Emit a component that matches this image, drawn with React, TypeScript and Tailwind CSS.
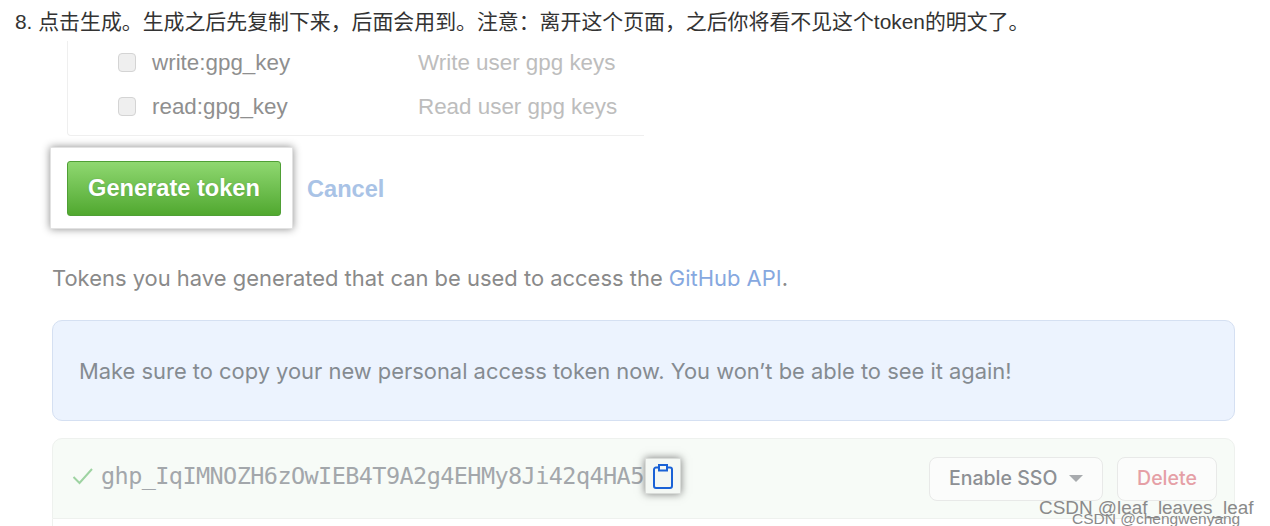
import React from "react";

const sans = "font-['Inter','Liberation_Sans',sans-serif]";

function GpgRow({ name, desc }: { name: string; desc: string }) {
  return (
    <div className="flex items-center h-[44px]">
      <span className="ml-[50px] w-[18px] h-[19px] rounded-[4px] border border-[#d4d4d4] bg-[#efefef] -translate-y-[1px]" />
      <span className="ml-[16px] w-[266px] text-[22.4px] text-[#8f8f8f] font-['Liberation_Sans',sans-serif]">{name}</span>
      <span className="text-[22.4px] text-[#bdbdbd] font-['Liberation_Sans',sans-serif]">{desc}</span>
    </div>
  );
}

export default function App() {
  return (
    <div className="w-[1270px] h-[526px] overflow-hidden bg-white relative">
      <p className="pl-[15px] pt-[9px] h-[41px] text-[20.9px] leading-[26px] text-[#333333] font-['Liberation_Sans','Noto_Sans_CJK_SC',sans-serif] whitespace-nowrap">
        8. 点击生成。生成之后先复制下来，后面会用到。注意：离开这个页面，之后你将看不见这个token的明文了。
      </p>
      <div className="ml-[67px] w-[577px] h-[95px] border-l border-b border-[#efefef] rounded-bl-[4px] flex flex-col">
        <GpgRow name="write:gpg_key" desc="Write user gpg keys" />
        <GpgRow name="read:gpg_key" desc="Read user gpg keys" />
      </div>
      <div className="mt-[11px] ml-[50px] flex items-center">
        <div className="w-[243px] h-[82px] bg-white border border-[#e2e2e2] shadow-[0_0_8px_rgba(0,0,0,0.45)] flex items-center pl-[16px]">
          <button className="w-[214px] h-[55px] pt-[1px] rounded-[3px] border border-[#4f9f35] bg-gradient-to-b from-[#8fd870] to-[#50a82e] text-white text-[23.6px] font-bold font-['Liberation_Sans',sans-serif] [text-shadow:0_0_2px_rgba(0,0,0,0.15)]">
            Generate token
          </button>
        </div>
        <span className="ml-[14px] translate-y-[2px] text-[23.6px] font-bold text-[#a9c3e6] font-['Liberation_Sans',sans-serif]">Cancel</span>
      </div>
      <p className={`ml-[52px] mt-[34px] h-[30px] text-[21.95px] leading-[30px] text-[#8a8a8a] whitespace-nowrap ${sans}`}>
        Tokens you have generated that can be used to access the <span className="text-[#86a8e0]">GitHub API</span>.
      </p>
      <div className={`ml-[52px] mt-[27px] w-[1183px] h-[101px] rounded-[10px] border border-[#d5e0f2] bg-[#ecf3fe] flex items-center pl-[26px] pt-[2px] text-[21.9px] text-[#858b91] whitespace-nowrap ${sans}`}>
        Make sure to copy your new personal access token now. You won’t be able to see it again!
      </div>
      <div className="ml-[52px] mt-[17px] w-[1183px] h-[81px] rounded-t-[10px] border border-[#eef1ee] bg-[#f7fbf7] flex">
        <div className="flex items-center h-[74px]">
          <svg width="22" height="18" viewBox="0 0 22 18" className="ml-[19px] shrink-0" fill="none" stroke="#9ed3a2" strokeWidth="2">
            <path d="M1.5 10 L7.5 16 L20 2" />
          </svg>
          <span className="ml-[7px] pt-[2px] text-[23.5px] text-[#a3a7ab] font-['DejaVu_Sans_Mono',monospace] tracking-[-0.58px] whitespace-nowrap">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</span>
          <span className="ml-[1px] w-[36px] h-[36px] shrink-0 bg-[#f4f8f4] border border-[#d9dcd9] shadow-[0_0_8px_rgba(0,0,0,0.5)] flex items-center justify-center">
            <svg width="20" height="25" viewBox="0 0 20 25" fill="none" stroke="#1a62d6" strokeWidth="2">
              <path d="M6 3.5 H3 A2 2 0 0 0 1 5.5 V22 A2 2 0 0 0 3 24 H17 A2 2 0 0 0 19 22 V5.5 A2 2 0 0 0 17 3.5 H14" />
              <rect x="6" y="1" width="8" height="5.5" fill="#f4f8f4" />
            </svg>
          </span>
        </div>
        <div className="ml-auto mr-[17px] flex items-center gap-[14px] h-full">
          <span className={`w-[174px] h-[44px] rounded-[8px] border border-[#e8e9e8] bg-[#fbfcfb] flex items-center pl-[19px] text-[19.5px] font-medium text-[#8d9094] ${sans}`}>
            Enable SSO
            <span className="ml-[12px] w-0 h-0 border-l-[7px] border-r-[7px] border-t-[7px] border-l-transparent border-r-transparent border-t-[#a8abae]" />
          </span>
          <span className={`w-[100px] h-[44px] rounded-[8px] border border-[#e8e9e8] bg-[#fbfcfb] flex items-center justify-center text-[19.5px] font-medium text-[#e5a0a6] ${sans}`}>
            Delete
          </span>
        </div>
      </div>
      <div className="ml-[52px] w-[1183px] h-[10px] border-x border-[#eef1ee] bg-white" />
      <span className="absolute left-[1039px] top-[497px] text-[18.9px] leading-[22px] text-[#8a8a8a] font-['Liberation_Sans',sans-serif] whitespace-nowrap">CSDN @leaf_leaves_leaf</span>
      <span className="absolute left-[1072px] top-[509px] text-[15.5px] leading-[20px] text-[#8a8a8a] font-['Liberation_Sans',sans-serif] whitespace-nowrap">CSDN @chengwenyang</span>
    </div>
  );
}
